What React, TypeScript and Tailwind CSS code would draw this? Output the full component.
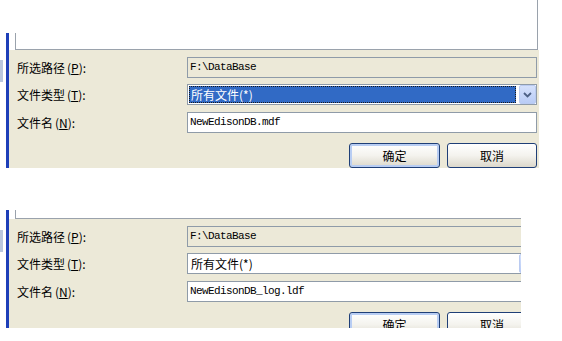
import React from "react";

const cjk = "font-['Noto_Sans_CJK_SC','Noto_Sans',sans-serif]";
const mono = "font-['Liberation_Mono','Noto_Sans_CJK_SC',monospace]";

function Label({ text, hot }: { text: string; hot: string }) {
    return (
        <div className={`${cjk} text-[12px] leading-none text-black flex items-center`}>
            {text}
            <span className="ml-[2px]">(</span>
            <span className="underline underline-offset-1">{hot}</span>):
        </div>
    );
}

function Chevron() {
    return (
        <svg width="9" height="6" viewBox="0 0 9 6">
            <path d="M1 1 L4.5 4.5 L8 1" fill="none" stroke="#4D6185" strokeWidth="1.8" />
        </svg>
    );
}

function Combo({ selected }: { selected: boolean }) {
    return (
        <div className="h-[21px] w-[350px] border border-[#8F9BA8] bg-white flex items-stretch">
            <div className="flex-1 p-px">
                {selected ? (
                    <div className={`h-full bg-[#316AC5] outline-1 outline-dotted outline-[#1a1a1a] -outline-offset-1 flex items-center pl-[2px] ${cjk} text-[12px] text-white leading-none`}>
                        所有文件(*)
                    </div>
                ) : (
                    <div className={`h-full flex items-center pl-[2px] ${cjk} text-[12px] text-black leading-none`}>
                        所有文件(*)
                    </div>
                )}
            </div>
            <div className="w-[17px] shrink-0 ml-[2px] rounded-[2px] border border-[#BACBF1] bg-gradient-to-b from-[#D5E1FB] to-[#B9CCF6] flex items-center justify-center">
                <Chevron />
            </div>
        </div>
    );
}

function TextBox({ value, readOnly }: { value: string; readOnly?: boolean }) {
    return (
        <div
            className={`h-[21px] w-[350px] border border-[#8F9BA8] flex items-center pl-[2px] ${mono} text-[11px] tracking-[-0.6px] text-black leading-none ${
                readOnly ? "bg-[#ECE9D8]" : "bg-white"
            }`}
        >
            {value}
        </div>
    );
}

function XpButton({ label, primary }: { label: string; primary?: boolean }) {
    return (
        <div
            className={`h-[25px] shrink-0 rounded-[3px] border border-[#1F3F77] bg-gradient-to-b from-white via-[#F4F3EE] to-[#DCD8CB] flex items-center justify-center ${cjk} text-[12px] text-black leading-none ${
                primary ? "w-[91px] shadow-[inset_0_0_0_2px_#B8CDF3]" : "w-[90px]"
            }`}
        >
            {label}
        </div>
    );
}

function Panel({
    top,
    fileName,
    selected,
    sideOffset,
}: {
    top: boolean;
    fileName: string;
    selected: boolean;
    sideOffset: number;
}) {
    return (
        <div className="flex w-[539px]">
            {/* leftover edge of window behind */}
            <div className="w-[3px] shrink-0">
                <div className="h-[22px] bg-[#B9C6DE]" style={{ marginTop: sideOffset }} />
            </div>
            <div className="w-[3px] shrink-0" />
            {/* blue frame edge */}
            <div className={`w-[3px] shrink-0 bg-[#1E3FB8] ${top ? "mt-[33px] h-[135px]" : "h-[118px]"}`} />
            <div className="w-[530px] shrink-0 flex flex-col">
                {/* file list box bottom */}
                <div className={`flex ${top ? "h-[50px]" : "h-[9px]"}`}>
                    <div className="w-[6px] shrink-0" />
                    <div className="w-[523px] shrink-0 border-r border-b border-[#9AA2AC] flex">
                        <div className={`w-px bg-[#9AA2AC] ${top ? "mt-[33px]" : ""}`} />
                    </div>
                </div>
                {/* form */}
                <div className={`bg-[#ECE9D8] pl-[8px] pt-[7px] overflow-hidden ${top ? "h-[118px]" : "h-[109px]"}`}>
                    <div className="grid grid-cols-[170px_350px] gap-y-[6px]">
                        <Label text="所选路径" hot="P" />
                        <TextBox value="F:\DataBase" readOnly />
                        <Label text="文件类型" hot="T" />
                        <Combo selected={selected} />
                        <div className="mt-px flex">
                            <Label text="文件名" hot="N" />
                        </div>
                        <div className="mt-px">
                            <TextBox value={fileName} />
                        </div>
                    </div>
                    <div className="mt-[10px] w-[520px] flex justify-end gap-[7px]">
                        <XpButton label="确定" primary />
                        <XpButton label="取消" />
                    </div>
                </div>
            </div>
        </div>
    );
}

export default function App() {
    return (
        <div className="w-[562px] h-[341px] bg-white overflow-hidden">
            <Panel top fileName="NewEdisonDB.mdf" selected sideOffset={60} />
            <div className="mt-[42px] w-[521px] overflow-hidden">
                <Panel top={false} fileName="NewEdisonDB_log.ldf" selected={false} sideOffset={20} />
            </div>
        </div>
    );
}
